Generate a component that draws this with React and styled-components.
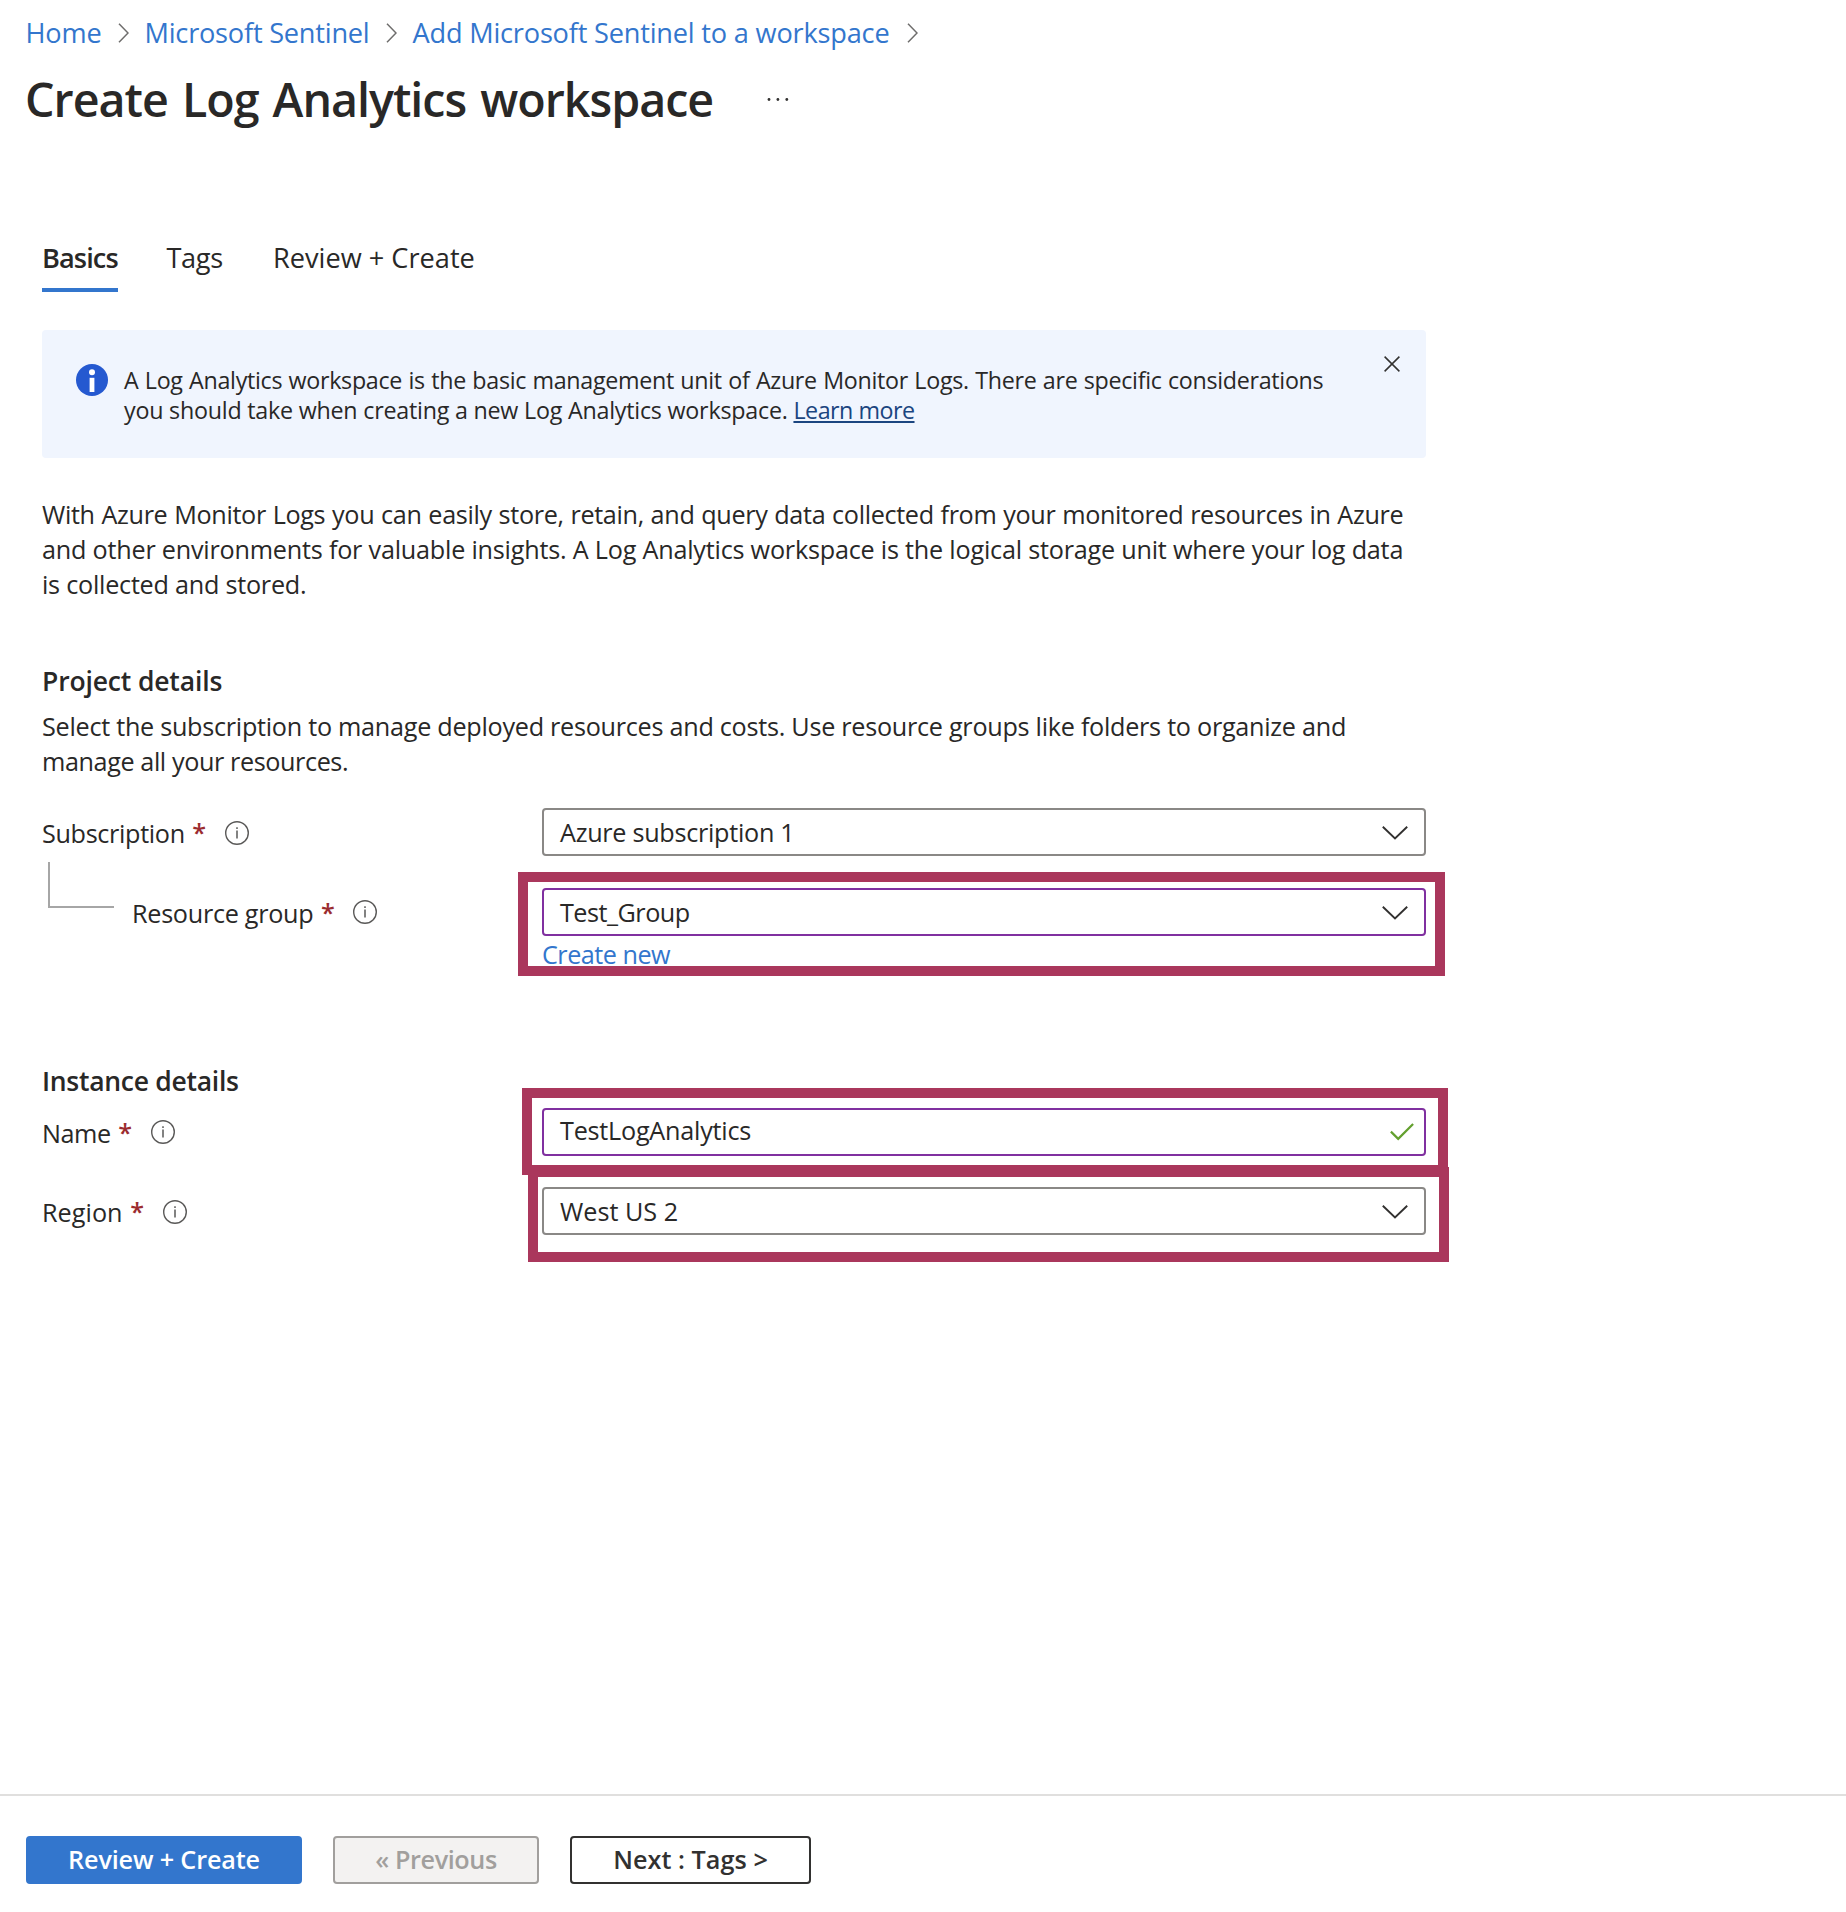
import React from "react";
import styled, { createGlobalStyle } from "styled-components";

const Global = createGlobalStyle`
  * { box-sizing: border-box; }
  body {
    margin: 0;
    background: #fff;
    color: #292827;
    font-family: "Open Sans", "Noto Sans", sans-serif;
    font-size: 25.2px;
  }
`;

const Page = styled.div`
  display: flex;
  flex-direction: column;
  width: 1846px;
  height: 1912px;
  overflow: hidden;
`;

const Breadcrumb = styled.nav`
  display: flex;
  gap: 16px;
  padding: 13px 0 0 25.5px;
  height: 52px;
`;

const Crumb = styled.div`
  display: flex;
  align-items: center;
  justify-content: space-between;
  width: ${(p) => p.$width}px;
  height: 40px;
`;

const CrumbLink = styled.a`
  color: #3376cd;
  font-size: 27.16px;
  line-height: 40px;
  letter-spacing: ${(p) => p.$ls || 0}px;
  white-space: nowrap;
`;

const Header = styled.header`
  display: flex;
  align-items: center;
  gap: 53px;
  margin-top: 15px;
  padding-left: 25px;
  height: 64px;
`;

const Title = styled.h1`
  margin: 0;
  width: 688px;
  font-size: 46.6px;
  font-weight: 600;
  line-height: 64px;
  letter-spacing: -1px;
  word-spacing: 3px;
  white-space: nowrap;
`;

const Content = styled.main`
  display: flex;
  flex-direction: column;
  flex: 1;
  width: 1426px;
  padding: 107px 0 0 42px;
`;

const Tabs = styled.div`
  display: flex;
  height: 54px;
`;

const Tab = styled.div`
  width: ${(p) => p.$width}px;
  margin-right: ${(p) => p.$after || 0}px;
  border-bottom: 4px solid ${(p) => (p.$active ? "#3376cd" : "transparent")};
  font-size: 27.16px;
  font-weight: ${(p) => (p.$active ? 600 : 400)};
  line-height: 40px;
  letter-spacing: ${(p) => p.$ls}px;
  white-space: nowrap;
`;

const InfoBar = styled.section`
  display: flex;
  align-items: flex-start;
  height: 128px;
  margin-top: 38px;
  padding: 34px 26px 0 34px;
  border-radius: 4px;
  background: #f0f5fe;
  font-size: 23.28px;
  line-height: 30px;
`;

const InfoText = styled.div`
  flex: 1;
  margin: 1px 0 0 16px;
`;

const Line = styled.span`
  display: block;
  letter-spacing: ${(p) => p.$ls}px;
  word-spacing: ${(p) => p.$ws || 0}px;
  white-space: nowrap;
`;

const LearnMore = styled.a`
  color: #1b4580;
  letter-spacing: -0.5px;
  text-decoration: underline;
  text-decoration-thickness: 2px;
  text-underline-offset: 2px;
`;

const CloseButton = styled.button`
  display: flex;
  margin: -8px 0 0;
  padding: 0;
  border: 0;
  background: none;
`;

const Paragraph = styled.p`
  margin: ${(p) => p.$top}px 0 0;
  line-height: 35px;
`;

const SectionTitle = styled.h2`
  margin: ${(p) => p.$top}px 0 0;
  font-size: 26.5px;
  font-weight: 600;
  line-height: 36px;
  letter-spacing: ${(p) => p.$ls}px;
`;

const Row = styled.div`
  display: grid;
  grid-template-columns: 500px 884px;
  align-items: start;
  margin-top: ${(p) => p.$top}px;
`;

const Label = styled.label`
  display: flex;
  align-items: center;
  height: 48px;
  padding-left: ${(p) => (p.$nested ? 90 : 0)}px;
`;

const LabelText = styled.span`
  padding-top: 2px;
  letter-spacing: ${(p) => p.$ls}px;
  white-space: nowrap;
`;

const Required = styled.span`
  width: 14px;
  margin: 0 18.5px 0 7.5px;
  color: #9b2c2f;
  font-weight: 600;
`;

const IconSlot = styled.span`
  display: flex;
  padding-top: ${(p) => p.$drop || 0}px;
`;

const Branch = styled.span`
  position: absolute;
  left: 48px;
  top: 862px;
  width: 66px;
  height: 46px;
  border-left: 2px solid #a6a6a6;
  border-bottom: 2px solid #a6a6a6;
`;

const Control = styled.div`
  position: relative;
`;

const Field = styled.div`
  display: flex;
  align-items: center;
  justify-content: space-between;
  height: 48px;
  padding: 0 ${(p) => p.$right || 16}px 0 16px;
  border: 2px solid ${(p) => (p.$edited ? "#8030a0" : "#8a8886")};
  border-radius: 4px;
`;

const Value = styled.span`
  padding-bottom: ${(p) => p.$lift || 0}px;
  letter-spacing: ${(p) => p.$ls}px;
  white-space: nowrap;
`;

const CreateNew = styled.a`
  display: block;
  color: #3376cd;
  line-height: 36px;
  letter-spacing: -0.5px;
`;

const Highlight = styled.div`
  position: absolute;
  inset: ${(p) => p.$inset};
  border: 10px solid #aa375c;
  pointer-events: none;
`;

const Footer = styled.footer`
  display: flex;
  height: 118px;
  padding: 40px 0 0 26px;
  border-top: 2px solid #e0dfde;
`;

const Button = styled.button`
  width: ${(p) => p.$width}px;
  height: 48px;
  margin-right: 31px;
  padding: 0 0 3px;
  border: 2px solid ${(p) => p.$border};
  border-radius: 4px;
  background: ${(p) => p.$bg};
  color: ${(p) => p.$color};
  font: 600 25.2px "Open Sans", "Noto Sans", sans-serif;
  letter-spacing: ${(p) => p.$ls}px;
  white-space: nowrap;
`;

const CrumbArrow = () => (
  <svg width="11" height="20" viewBox="0 0 11 20" fill="none" stroke="#6e6d6c" strokeWidth="1.5">
    <path d="M1 .7 10 10 1 19.3" />
  </svg>
);

const Chevron = () => (
  <svg width="26" height="15" viewBox="0 0 26 15" fill="none" stroke="#323130" strokeWidth="1.9">
    <path d="M.8 1.7 13 13.4 25.2 1.7" />
  </svg>
);

const Check = () => (
  <svg width="24" height="18" viewBox="0 0 24 18" fill="none" stroke="#63a02f" strokeWidth="2.2">
    <path d="M.9 8.6 8.2 15.9 23.1 1" />
  </svg>
);

const InfoOutline = () => (
  <svg width="24" height="24" viewBox="0 0 24 24" fill="none" stroke="#5a5958">
    <circle cx="12" cy="12" r="11.3" strokeWidth="1.4" />
    <path d="M12 9.5V17.5M12 6.2V8" strokeWidth="1.5" />
  </svg>
);

const InfoSolid = () => (
  <svg width="32" height="32" viewBox="0 0 32 32">
    <circle cx="16" cy="16" r="16" fill="#2559d0" />
    <circle cx="16" cy="8.3" r="3" fill="#fff" />
    <path d="M13.6 13.8h4.8V28h-4.8z" fill="#fff" />
  </svg>
);

const Close = () => (
  <svg width="16" height="16" viewBox="0 0 16 16" stroke="#323130" strokeWidth="1.5">
    <path d="M.6.6 15.4 15.4M15.4.6.6 15.4" />
  </svg>
);

const Dots = () => (
  <svg width="24" height="6" viewBox="0 0 24 6" fill="#323130">
    <circle cx="3" cy="3.5" r="1.4" />
    <circle cx="11.9" cy="3.5" r="1.4" />
    <circle cx="20.8" cy="3.5" r="1.4" />
  </svg>
);

function FieldLabel({ text, ls, nested, drop }) {
  return (
    <Label $nested={nested}>
      <LabelText $ls={ls}>{text}</LabelText>
      <Required>*</Required>
      <IconSlot $drop={drop}>
        <InfoOutline />
      </IconSlot>
    </Label>
  );
}

export default function App() {
  return (
    <>
      <Global />
      <Page>
        <Breadcrumb>
          <Crumb $width={103}>
            <CrumbLink $ls={-0.15}>Home</CrumbLink>
            <CrumbArrow />
          </Crumb>
          <Crumb $width={252}>
            <CrumbLink $ls={-0.22}>Microsoft Sentinel</CrumbLink>
            <CrumbArrow />
          </Crumb>
          <Crumb $width={505}>
            <CrumbLink $ls={-0.2}>Add Microsoft Sentinel to a workspace</CrumbLink>
            <CrumbArrow />
          </Crumb>
        </Breadcrumb>
        <Header>
          <Title>Create Log Analytics workspace</Title>
          <Dots />
        </Header>

        <Content>
          <Tabs>
            <Tab $active $width={76} $after={48.5} $ls={-0.9}>Basics</Tab>
            <Tab $width={56} $after={50.5} $ls={-0.36}>Tags</Tab>
            <Tab $width={204} $ls={0}>Review + Create</Tab>
          </Tabs>

          <InfoBar>
            <InfoSolid />
            <InfoText>
              <Line $ls={-0.31} $ws={0.7}>
                A Log Analytics workspace is the basic management unit of Azure Monitor Logs. There are specific considerations
              </Line>
              <Line $ls={-0.225}>
                you should take when creating a new Log Analytics workspace. <LearnMore>Learn more</LearnMore>
              </Line>
            </InfoText>
            <CloseButton aria-label="Dismiss">
              <Close />
            </CloseButton>
          </InfoBar>

          <Paragraph $top={39}>
            <Line $ls={-0.34} $ws={0.6}>
              With Azure Monitor Logs you can easily store, retain, and query data collected from your monitored resources in Azure
            </Line>
            <Line $ls={-0.213}>
              and other environments for valuable insights. A Log Analytics workspace is the logical storage unit where your log data
            </Line>
            <Line $ls={-0.24}>is collected and stored.</Line>
          </Paragraph>

          <SectionTitle $top={61} $ls={-0.15}>Project details</SectionTitle>
          <Paragraph $top={10}>
            <Line $ls={-0.268}>
              Select the subscription to manage deployed resources and costs. Use resource groups like folders to organize and
            </Line>
            <Line $ls={-0.4}>manage all your resources.</Line>
          </Paragraph>

          <Row $top={29}>
            <FieldLabel text="Subscription" ls={-0.33} drop={2} />
            <Control>
              <Field>
                <Value $ls={-0.28}>Azure subscription 1</Value>
                <Chevron />
              </Field>
            </Control>
          </Row>
          <Branch />
          <Row $top={32}>
            <FieldLabel text="Resource group" ls={-0.278} nested />
            <Control>
              <Field $edited>
                <Value $ls={-0.5}>Test_Group</Value>
                <Chevron />
              </Field>
              <CreateNew>Create new</CreateNew>
              <Highlight $inset="-16px -19px -4px -24px" />
            </Control>
          </Row>

          <SectionTitle $top={91} $ls={-0.28}>Instance details</SectionTitle>
          <Row $top={9}>
            <FieldLabel text="Name" ls={-0.45} />
            <Control>
              <Field $edited $right={10}>
                <Value $ls={-0.23} $lift={4}>TestLogAnalytics</Value>
                <Check />
              </Field>
              <Highlight $inset="-20px -22px -19px -20px" />
            </Control>
          </Row>
          <Row $top={31}>
            <FieldLabel text="Region" ls={0.05} drop={2} />
            <Control>
              <Field>
                <Value $ls={0}>West US 2</Value>
                <Chevron />
              </Field>
              <Highlight $inset="-20px -23px -27px -14px" />
            </Control>
          </Row>
        </Content>

        <Footer>
          <Button $width={276} $bg="#3376cd" $border="#3376cd" $color="#fff" $ls={-0.147}>
            Review + Create
          </Button>
          <Button $width={206} $bg="#f3f2f1" $border="#a19f9d" $color="#a19f9d" $ls={-0.4}>
            « Previous
          </Button>
          <Button $width={241} $bg="#fff" $border="#323130" $color="#323130" $ls={0.05}>
            Next : Tags &gt;
          </Button>
        </Footer>
      </Page>
    </>
  );
}
